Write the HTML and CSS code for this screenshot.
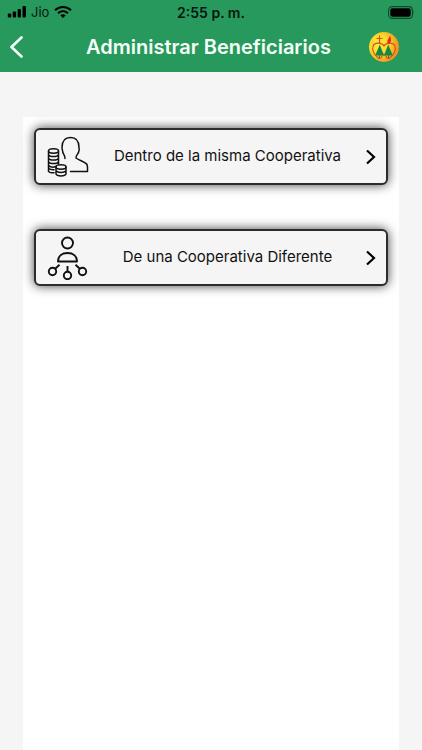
FILE: index.html
```html
<!DOCTYPE html>
<html lang="es">
<head>
<meta charset="utf-8">
<meta name="viewport" content="width=device-width, initial-scale=1">
<title>Administrar Beneficiarios</title>
<link rel="stylesheet" href="styles.css">
</head>
<body>
<header class="header">
  <div class="status">
    <div class="carrier">
      <svg width="20" height="12" viewBox="0 0 20 12" aria-hidden="true"><rect x=".8" y="7.500" width="3.400" height="4" rx="1"/><rect x="5.700" y="5.500" width="3.400" height="6" rx="1"/><rect x="10.600" y="3" width="3.400" height="8.500" rx="1"/><rect x="15.500" y="0" width="3.400" height="11.500" rx="1"/></svg>
      <span>Jio</span>
      <svg class="wifi" width="18" height="12" viewBox="0 0 18 12" aria-hidden="true"><path d="M1 4.300C5.500-.1 12.500-.1 17 4.300M4 7.300c3-2.700 7-2.700 10 0" fill="none" stroke="#000" stroke-width="2"/><path d="M6.300 9.200c1.700-1.400 3.700-1.400 5.400 0L9 12z"/></svg>
    </div>
    <time class="clock">2:55 p. m.</time>
    <svg class="battery" width="27" height="13" viewBox="0 0 27 13" aria-hidden="true"><rect x=".6" y=".6" width="23.800" height="11.800" rx="3.500" fill="none" stroke="#0f4a2b" stroke-width="1.100"/><rect x="2.300" y="2.300" width="20.400" height="8.400" rx="2"/><path d="M25.500 4.300q1.500 2.200 0 4.400z" fill="#0f4a2b"/></svg>
  </div>
  <nav class="bar">
    <button class="back" type="button" aria-label="Atrás">
      <svg width="14" height="22" viewBox="0 0 14 22" aria-hidden="true"><path d="M11.500 1.500 1.500 11l10 9.500" fill="none" stroke="#f4fff8" stroke-width="2.600" stroke-linecap="round" stroke-linejoin="round"/></svg>
    </button>
    <h1 class="title">Administrar Beneficiarios</h1>
    <svg width="30" height="30" viewBox="0 0 30 30" aria-hidden="true">
      <defs><radialGradient id="sun" cx=".34" cy=".42" r=".68"><stop offset="0" stop-color="#fff03a"/><stop offset=".5" stop-color="#fbd52b"/><stop offset="1" stop-color="#ed8a20"/></radialGradient></defs>
      <circle cx="15" cy="15" r="15" fill="url(#sun)"/>
      <g fill="none" stroke="#dc4a1c" stroke-width="1.100"><path d="M10.500 3.500v8M7.500 6.500h6"/><path d="M15 14C13 10.500 6 10 4.300 13.500c-2 4.500 1.200 9.500 4.200 11.500 0 2 4 2 4 0l2.500-3 2.500 3c0 2 4 2 4 0 3-2 6.200-7 4.200-11.500C24 10 17 10.500 15 14z"/></g>
      <path d="M20 12c-3.500-2.500-.5-4.500 1-8.500 1.300 3.500 1.800 6-1 8.500z" fill="#df2b18"/>
      <path d="m10.800 12.500 4.200 11H6.200zM19.200 12.500l4.600 11H15z" fill="#168844"/>
      <path d="M10.500 23v3M19.500 23v3" stroke="#168844" stroke-width="1.200"/>
    </svg>
  </nav>
</header>
<main class="panel">
  <button class="card" type="button">
    <svg class="icon" width="42" height="42" viewBox="0 0 42 42" fill="none" stroke="#111" stroke-width="1.500" stroke-linecap="round" stroke-linejoin="round" aria-hidden="true">
      <path d="M18 22.500c.3-3.500-2.500-4.500-2.500-8 0-1-.7-1.500-.5-3C15 5 18 1.500 23.500 1.500S32 5 32 11.500c0 1 .5 2 0 3 0 3.500-3.500 4.500-3 7.500 3.500 2.500 9.500 4 11 6.500.7 2 .5 4 .5 7H23.500"/>
      <ellipse cx="6.500" cy="15" rx="5" ry="2.200"/>
      <path d="M1.500 15v20.500c1.500 1.300 3.500 1.500 5.500 1.300M11.500 15v13M1.500 18.500c1 2.800 9 2.800 10 0M1.500 22c1 2.800 9 2.800 10 0M1.500 25.500c1 2.800 9 2.800 10 0M1.500 29c1 2.500 5 2.500 7 1.500M1.500 32.200q2 1.800 5.500 1.500"/>
      <ellipse cx="14" cy="31" rx="5" ry="2.200"/>
      <path d="M9 31v7c1 2.500 9 2.500 10 0v-7M9 34.500c1 2.500 9 2.500 10 0"/>
    </svg>
    <span class="label">Dentro de la misma Cooperativa</span>
    <svg class="chevron" width="12" height="16" viewBox="0 0 12 16" aria-hidden="true"><path d="m2 1.500 7 6.500-7 6.500" fill="none" stroke="#000" stroke-width="2.200"/></svg>
  </button>
  <button class="card" type="button">
    <svg class="icon" width="42" height="44" viewBox="0 0 42 44" fill="none" stroke="#111" stroke-width="1.900" aria-hidden="true">
      <circle cx="20.500" cy="7" r="5.500"/>
      <path d="M11 25.500c0-5.500 4-8.500 9.500-8.500s9.500 3 9.500 8.500z" stroke-linejoin="round"/>
      <circle cx="5.500" cy="35.500" r="3.700"/><circle cx="20.500" cy="39.500" r="3.700"/><circle cx="35.500" cy="35.500" r="3.700"/>
      <path d="m8.200 32.800 4.300-4M20.500 30v5.800M32.800 32.800l-4.300-4"/>
    </svg>
    <span class="label">De una Cooperativa Diferente</span>
    <svg class="chevron" width="12" height="16" viewBox="0 0 12 16" aria-hidden="true"><path d="m2 1.500 7 6.500-7 6.500" fill="none" stroke="#000" stroke-width="2.200"/></svg>
  </button>
</main>
</body>
</html>
```
FILE: styles.css
```css
* {
  box-sizing: border-box;
}

body {
  display: flex;
  flex-direction: column;
  min-height: 100vh;
  margin: 0;
  background: #f5f5f5;
  color: #111;
  font-family: Inter, "Liberation Sans", sans-serif;
}

svg {
  display: block;
  flex: none;
}

button {
  margin: 0;
  color: inherit;
  font: inherit;
  cursor: pointer;
}

.header {
  background: #28995d;
}

.status {
  display: grid;
  grid-template-columns: 1fr auto 1fr;
  align-items: center;
  height: 24px;
  padding: 0 7px;
  color: #06160d;
  font-size: 13px;
}

.carrier {
  display: flex;
  align-items: center;
  gap: 4px;
}

.wifi {
  margin-left: 1px;
}

.clock {
  font-size: 14px;
  font-weight: 600;
}

.battery {
  justify-self: end;
}

.bar {
  display: grid;
  grid-template-columns: 48px 1fr 38px;
  align-items: center;
  height: 48px;
  padding: 0 15px 2px 0;
}

.back {
  padding: 8px 10px;
  border: 0;
  background: none;
}

.title {
  margin: 0;
  color: #f4fff8;
  font-size: 20px;
  font-weight: 600;
  line-height: 24px;
  text-align: center;
}

.panel {
  display: flex;
  flex: 1;
  flex-direction: column;
  gap: 44px;
  margin: 45px 23px 0;
  padding: 11px;
  background: #fff;
}

.card {
  display: grid;
  grid-template-columns: 60px 1fr 27px;
  align-items: center;
  height: 57px;
  padding: 0;
  border: 2px solid #2c2c2c;
  border-radius: 6px;
  background: #f5f5f5;
  box-shadow: 0 0 11px rgba(0, 0, 0, 0.75);
}

.icon {
  margin-left: 11px;
}

.label {
  padding-bottom: 2px;
  font-size: 15px;
  line-height: 20px;
  text-align: center;
}

.chevron {
  margin-left: 6px;
}
```
